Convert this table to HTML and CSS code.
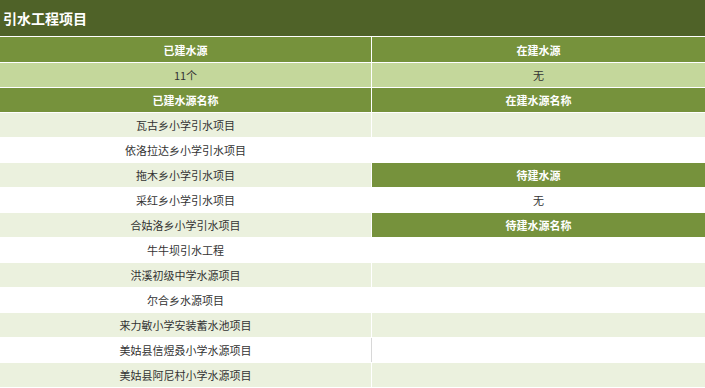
FILE: index.html
```html
<!DOCTYPE html>
<html lang="zh">
<head>
<meta charset="utf-8">
<title>引水工程项目</title>
<link rel="stylesheet" href="styles.css">
</head>
<body>
<div class="title">引水工程项目</div>
<div class="grid">
  <div class="cell head first">已建水源</div>
  <div class="cell head first">在建水源</div>
  <div class="cell mid">11个</div>
  <div class="cell mid">无</div>
  <div class="cell head">已建水源名称</div>
  <div class="cell head">在建水源名称</div>

  <div class="cell odd">瓦古乡小学引水项目</div>
  <div class="cell odd"></div>
  <div class="cell even">依洛拉达乡小学引水项目</div>
  <div class="cell even"></div>
  <div class="cell odd">拖木乡小学引水项目</div>
  <div class="cell head">待建水源</div>
  <div class="cell even">采红乡小学引水项目</div>
  <div class="cell even">无</div>
  <div class="cell odd">合姑洛乡小学引水项目</div>
  <div class="cell head">待建水源名称</div>
  <div class="cell even">牛牛坝引水工程</div>
  <div class="cell even"></div>
  <div class="cell odd">洪溪初级中学水源项目</div>
  <div class="cell odd"></div>
  <div class="cell even">尔合乡水源项目</div>
  <div class="cell even"></div>
  <div class="cell odd">来力敏小学安装蓄水池项目</div>
  <div class="cell odd"></div>
  <div class="cell even">美姑县信煜叒小学水源项目</div>
  <div class="cell even edge"></div>
  <div class="cell odd">美姑县阿尼村小学水源项目</div>
  <div class="cell odd"></div>
</div>
</body>
</html>
```

FILE: styles.css
```css
html, body {
  margin: 0;
  padding: 0;
  background: #ffffff;
}
body {
  font-family: "Noto Sans CJK SC", "Microsoft YaHei", sans-serif;
  width: 705px;
  overflow: hidden;
}
.title {
  height: 36px;
  line-height: 36px;
  background: #4f6228;
  color: #ffffff;
  font-size: 14px;
  font-weight: bold;
  padding-left: 3px;
  margin-bottom: 1px;
}
.grid {
  display: grid;
  grid-template-columns: 371px 1fr;
  column-gap: 1px;
  row-gap: 1px;
  background: #ffffff;
}
.cell {
  height: 24px;
  display: flex;
  align-items: center;
  justify-content: center;
  font-size: 11px;
  color: #333333;
}
.cell.first {
  height: 25px;
}
.head {
  background: #76923c;
  color: #ffffff;
  font-weight: bold;
}
.mid {
  background: #c4d79b;
}
.odd {
  background: #ebf1de;
}
.even {
  background: #ffffff;
}
.edge {
  box-shadow: -1px 0 0 #d8d8d8;
}
```
